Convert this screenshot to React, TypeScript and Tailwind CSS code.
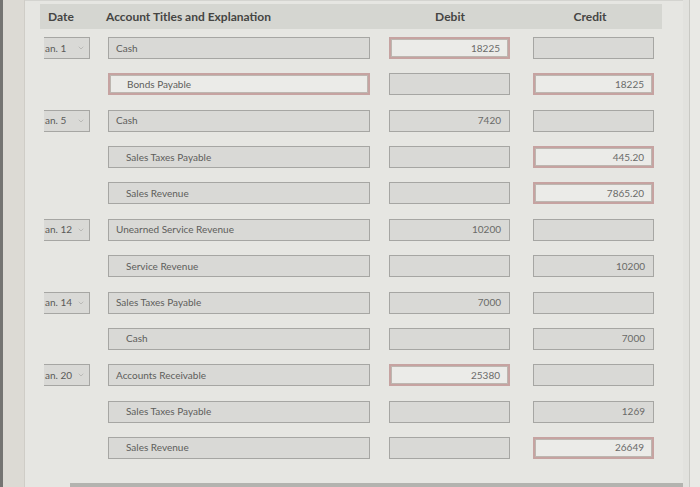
import React from "react";
import { ChevronDown } from "lucide-react";

type Row = {
  date?: string;
  account: string;
  indent?: boolean;
  debit?: string;
  credit?: string;
  redAccount?: boolean;
  redDebit?: boolean;
  redCredit?: boolean;
};

const rows: Row[] = [
  { date: "an. 1", account: "Cash", debit: "18225", redDebit: true },
  { account: "Bonds Payable", indent: true, credit: "18225", redAccount: true, redCredit: true },
  { date: "an. 5", account: "Cash", debit: "7420" },
  { account: "Sales Taxes Payable", indent: true, credit: "445.20", redCredit: true },
  { account: "Sales Revenue", indent: true, credit: "7865.20", redCredit: true },
  { date: "an. 12", account: "Unearned Service Revenue", debit: "10200" },
  { account: "Service Revenue", indent: true, credit: "10200" },
  { date: "an. 14", account: "Sales Taxes Payable", debit: "7000" },
  { account: "Cash", indent: true, credit: "7000" },
  { date: "an. 20", account: "Accounts Receivable", debit: "25380", redDebit: true },
  { account: "Sales Taxes Payable", indent: true, credit: "1269" },
  { account: "Sales Revenue", indent: true, credit: "26649", redCredit: true },
];

const box = (red?: boolean) =>
  red
    ? "h-[22px] border-2 border-[#c6a3a1] bg-[#ebebe8] shadow-[inset_0_0_0_1px_#bdb6b0]"
    : "h-[22px] border border-[#a6a6a3] bg-[#d9d9d6]";

const App: React.FC = () => {
  return (
    <div
      className="flex h-[487px] w-[700px] overflow-hidden bg-[#e6e6e2] text-[#5d5d5b]"
      style={{ fontFamily: "Lato, 'Open Sans', sans-serif" }}
    >
      <div className="w-[3px] bg-[#747472]" />
      <div className="w-[22px] border-r border-[#cfcdc7] bg-[#dcdad4]" />

      <div className="flex flex-1 flex-col pt-[3px] border-t border-[#d4d4d0]">
        {/* header */}
        <div className="ml-[15px] mr-[21px] flex h-[25px] items-center bg-[#d5d6d1] text-[12px] font-bold text-[#454543]">
          <div className="w-[42px] text-center">Date</div>
          <div className="ml-[24px] w-[273px]">Account Titles and Explanation</div>
          <div className="w-[142px] text-center">Debit</div>
          <div className="w-[138px] text-center">Credit</div>
        </div>

        <div className="mt-[8px] flex flex-col gap-[14.36px] pl-[19px]">
          {rows.map((r, i) => (
            <div key={i} className="flex items-center text-[10px]">
              <div className="w-[46px]">
                {r.date && (
                  <div className="flex h-[22px] items-center justify-between border border-l-0 border-[#a6a6a3] bg-[#d9d9d6] pl-[1px] pr-[4px] text-[#5a5a58]">
                    <span>{r.date}</span>
                    <ChevronDown size={8} strokeWidth={1.5} className="text-[#9a9a98]" />
                  </div>
                )}
              </div>
              <div
                className={`ml-[18px] flex w-[262px] items-center ${box(r.redAccount)} ${
                  r.indent ? "pl-[17px]" : "pl-[7px]"
                }`}
              >
                {r.account}
              </div>
              <div
                className={`ml-[19px] flex w-[121px] items-center justify-end pr-[8px] text-[#6a6a68] ${box(
                  r.redDebit
                )}`}
              >
                {r.debit}
              </div>
              <div
                className={`ml-[23px] flex w-[121px] items-center justify-end pr-[8px] text-[#6a6a68] ${box(
                  r.redCredit
                )}`}
              >
                {r.credit}
              </div>
            </div>
          ))}
        </div>

        <div className="mt-auto ml-[45px] h-[4px] bg-[#b3b3af]" />
      </div>

      <div className="w-[7px] border-r border-[#c9c9c4] bg-[#e2e2de]" />
      <div className="w-[10px] bg-[#e9e9e5]" />
    </div>
  );
};

export default App;
